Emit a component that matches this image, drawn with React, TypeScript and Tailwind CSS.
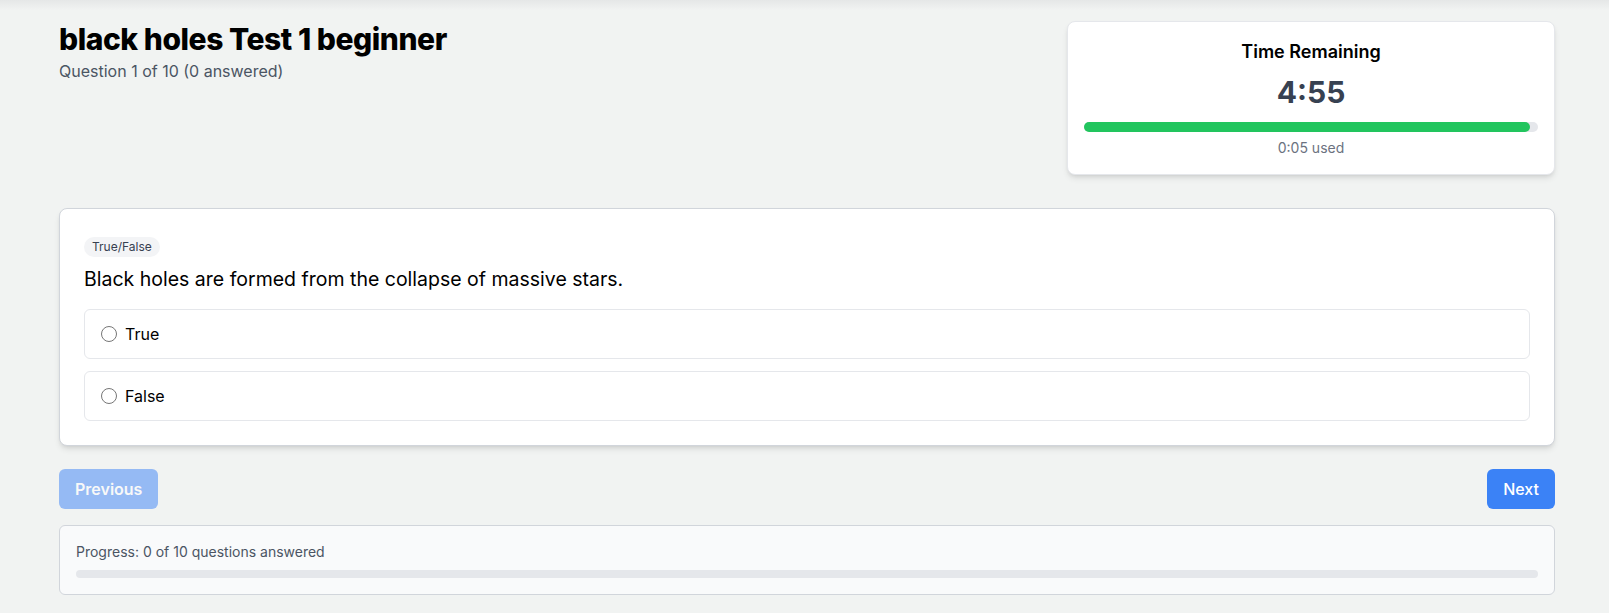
import { useState } from 'react'

const options = ['True', 'False']

export default function App() {
  const [answer, setAnswer] = useState<string | null>(null)

  return (
    <div className="min-h-screen bg-[#f1f3f2] font-['Inter',sans-serif] text-gray-900">
      <div className="h-2.5 bg-gradient-to-b from-[#e5e7e7] to-[#f1f3f2]" />
      <div className="pl-[59px] pr-[54px] pt-[11px] pb-4">
        {/* header */}
        <div className="flex items-start justify-between">
          <div>
            <h1 className="text-[30px] leading-9 font-extrabold tracking-[-0.015em] text-black">
              black holes Test 1 beginner
            </h1>
            <p className="mt-0.5 text-base text-[#4b5563]">Question 1 of 10 (0 answered)</p>
          </div>
          <div className="w-[488px] rounded-lg border border-[#e5e7eb] bg-white p-4 shadow-md">
            <div className="text-center text-lg font-semibold text-black">Time Remaining</div>
            <div className="mt-2 text-center text-3xl leading-9 font-bold text-[#374151]">4:55</div>
            <div className="mt-3 h-2.5 w-full rounded-full bg-[#e5e7eb]">
              <div className="h-2.5 rounded-full bg-[#22c55e]" style={{ width: '98.3%' }} />
            </div>
            <div className="mt-1.5 text-center text-sm text-[#6b7280]">0:05 used</div>
          </div>
        </div>

        {/* question */}
        <div className="mt-[33px] rounded-lg border border-[#d1d5db] bg-white px-6 pt-6 pb-6 shadow-md">
          <span className="inline-block rounded-full bg-[#f3f4f6] px-2 py-0.5 text-xs text-[#374151]">
            True/False
          </span>
          <h2 className="mt-2 text-[19.5px] leading-7 text-black">
            Black holes are formed from the collapse of massive stars.
          </h2>
          <div className="mt-4 space-y-3">
            {options.map((opt) => (
              <label
                key={opt}
                className="flex cursor-pointer items-center rounded-md border border-[#e5e7eb] px-4 py-3 hover:bg-gray-50"
              >
                <input
                  type="radio"
                  name="answer"
                  checked={answer === opt}
                  onChange={() => setAnswer(opt)}
                  className="h-4 w-4"
                />
                <span className="ml-2 text-base text-black">{opt}</span>
              </label>
            ))}
          </div>
        </div>

        {/* nav buttons */}
        <div className="mt-[23px] flex justify-between">
          <button
            disabled
            className="cursor-not-allowed rounded-md bg-[#3b82f6] px-4 py-2 font-semibold text-white opacity-50"
          >
            Previous
          </button>
          <button className="rounded-md bg-[#3b82f6] px-4 py-2 font-medium text-white hover:bg-[#2563eb]">
            Next
          </button>
        </div>

        {/* progress */}
        <div className="mt-4 rounded-md border border-[#d1d5db] bg-[#f9fafb] p-4">
          <div className="text-sm text-[#4b5563]">Progress: 0 of 10 questions answered</div>
          <div className="mt-2 h-2 w-full rounded-full bg-[#e5e7eb]">
            <div className="h-2 rounded-full bg-[#3b82f6]" style={{ width: '0%' }} />
          </div>
        </div>
      </div>
    </div>
  )
}
